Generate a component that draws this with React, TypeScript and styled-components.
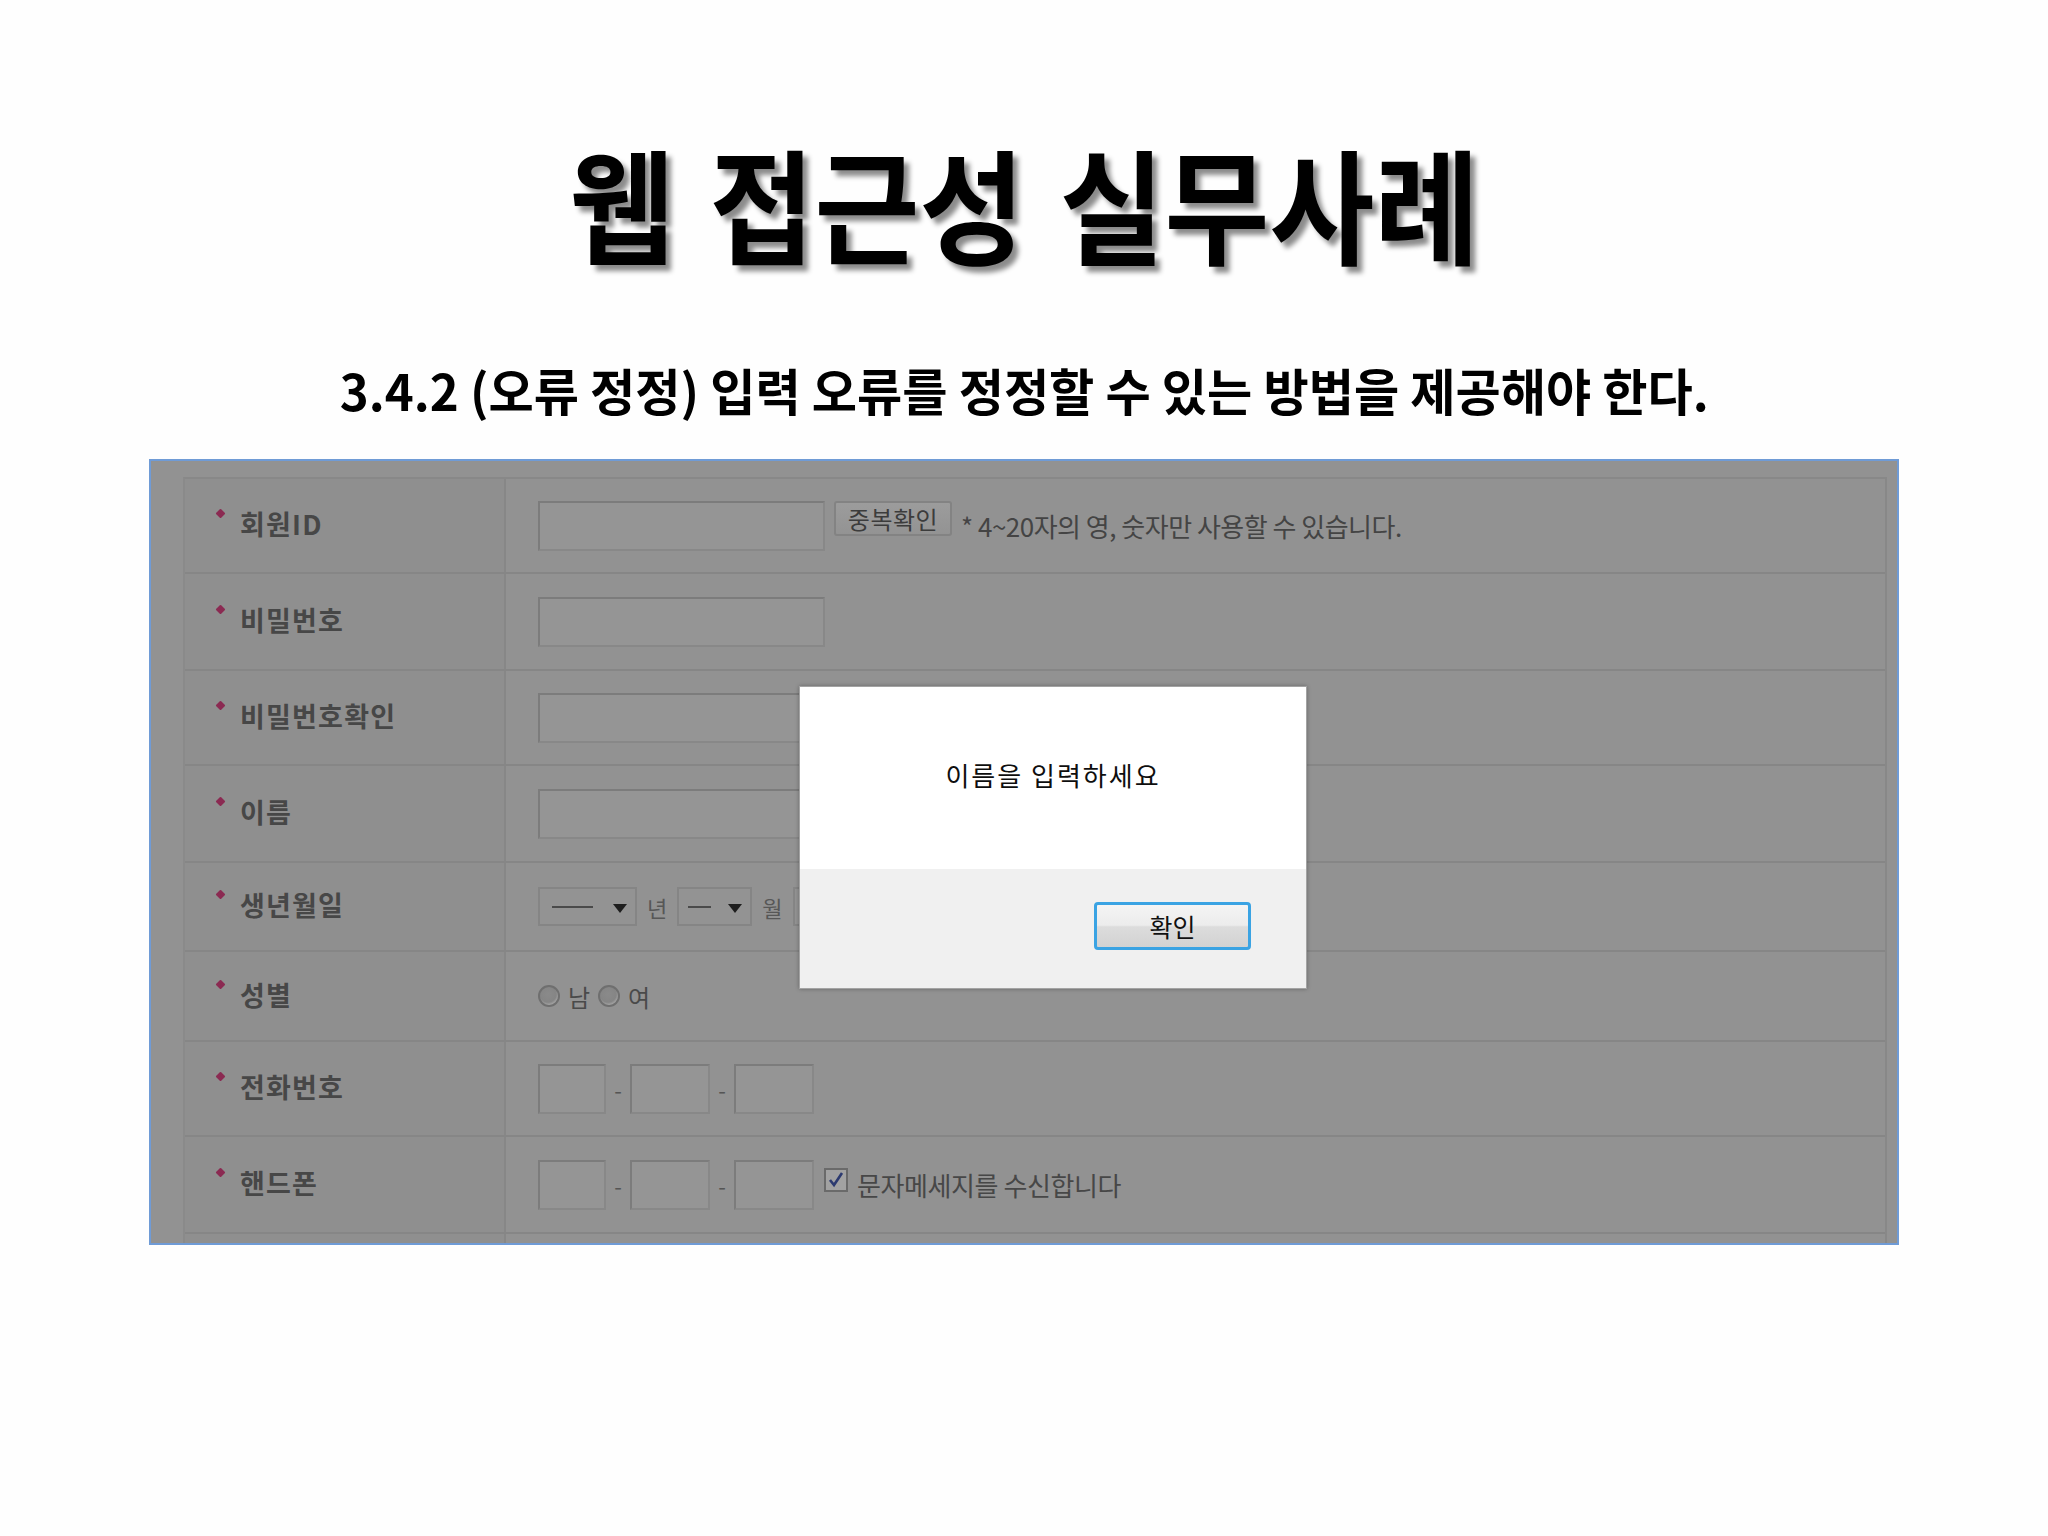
import React from "react";
import styled, { createGlobalStyle } from "styled-components";

const GlobalStyle = createGlobalStyle`
  html, body {
    margin: 0;
    padding: 0;
    background: #fefefe;
  }
  body {
    font-family: "Noto Sans CJK KR", "Noto Sans", sans-serif;
  }
`;

const Page = styled.div`
  width: 2048px;
  height: 1536px;
  box-sizing: border-box;
  padding-top: 139px;
  display: flex;
  flex-direction: column;
  align-items: center;
  background: #fefefe;
`;

const Title = styled.h1`
  margin: 0;
  font-size: 124px;
  line-height: 124px;
  font-weight: 700;
  color: #000;
  white-space: nowrap;
  word-spacing: 10px;
  transform: scaleX(0.92);
  text-shadow: 6px 6px 5px rgba(0, 0, 0, 0.45);
`;

const Subtitle = styled.h2`
  margin: 101px 0 0;
  font-size: 50px;
  line-height: 50px;
  font-weight: 700;
  color: #000;
  white-space: nowrap;
  transform: scaleX(0.983);
`;

const Frame = styled.div`
  position: relative;
  margin-top: 45px;
  width: 1750px;
  height: 786px;
  box-sizing: border-box;
  border: 2px solid #6f9bd6;
  background: #929292;
  padding: 16px 10px 0 32px;
  overflow: hidden;
`;

const Table = styled.div`
  border-top: 2px solid #888888;
  border-left: 2px solid #8a8a8a;
  border-right: 2px solid #888888;
`;

const Row = styled.div<{ $h: number }>`
  display: grid;
  grid-template-columns: 321px 1fr;
  height: ${(p) => p.$h}px;
  box-sizing: border-box;
  border-bottom: 2px solid #868686;
`;

const LabelCell = styled.div`
  display: flex;
  align-items: center;
  padding: 0 0 4px 28px;
  background: #8f8f8f;
  border-right: 2px solid #878787;
  font-size: 27px;
  font-weight: 700;
  color: #474747;
  letter-spacing: 1.2px;
`;

const Star = styled.span`
  width: 7px;
  height: 7px;
  margin: 0 16px 20px 4px;
  background: #8b2a52;
  transform: rotate(45deg);
  border-radius: 1px;
  flex-shrink: 0;
`;

const ValueCell = styled.div`
  display: flex;
  align-items: center;
  padding-left: 32px;
`;

const TopGroup = styled.div`
  display: flex;
  align-items: flex-start;
`;

const TextInput = styled.div<{ $w?: number }>`
  width: ${(p) => p.$w ?? 287}px;
  height: 50px;
  box-sizing: border-box;
  border: 2px solid #7c7c7c;
  border-right-color: #888888;
  border-bottom-color: #888888;
  background: #959595;
  flex-shrink: 0;
`;

const DupButton = styled.div`
  margin-left: 9px;
  width: 118px;
  height: 35px;
  box-sizing: border-box;
  border: 2px solid #838383;
  border-radius: 3px;
  background: linear-gradient(#9c9c9c, #939393);
  display: flex;
  align-items: center;
  justify-content: center;
  font-size: 24px;
  color: #3c3c3c;
  letter-spacing: 0.5px;
`;

const Hint = styled.span`
  margin-left: 9px;
  font-size: 26px;
  color: #444444;
  letter-spacing: -0.5px;
  white-space: nowrap;
`;

const SelectBox = styled.div<{ $w: number; $dash: number; $pad: number }>`
  width: ${(p) => p.$w}px;
  height: 39px;
  box-sizing: border-box;
  border: 2px solid #858585;
  background: #939393;
  display: flex;
  align-items: center;
  padding-left: ${(p) => p.$pad}px;
  padding-right: 8px;
  justify-content: space-between;
  flex-shrink: 0;

  &::before {
    content: "";
    width: ${(p) => p.$dash}px;
    height: 2px;
    background: #4a4a4a;
  }
`;

const Caret = styled.span`
  width: 0;
  height: 0;
  border-left: 7px solid transparent;
  border-right: 7px solid transparent;
  border-top: 9px solid #1e1e1e;
  margin-top: 3px;
`;

const Unit = styled.span`
  margin: 0 10px;
  font-size: 22px;
  color: #575757;
`;

const Radio = styled.span`
  width: 22px;
  height: 22px;
  box-sizing: border-box;
  border-radius: 50%;
  border: 2px solid #6f6f6f;
  background: radial-gradient(circle at 45% 40%, #8a8a8a 0%, #858585 55%, #a3a3a3 72%);
  flex-shrink: 0;
  margin-right: 8px;
`;

const RadioText = styled.span`
  font-size: 24px;
  color: #4a4a4a;
  margin-right: 8px;
`;

const Dash = styled.span`
  width: 24px;
  text-align: center;
  font-size: 22px;
  color: #555555;
`;

const CheckBox = styled.span`
  margin-left: 10px;
  width: 24px;
  height: 24px;
  box-sizing: border-box;
  border: 2px solid #6a6a6a;
  background: #a2a2a2;
  display: flex;
  align-items: center;
  justify-content: center;
  margin-top: -10px;
`;

const CheckText = styled.span`
  margin-left: 9px;
  font-size: 26px;
  color: #474747;
  letter-spacing: -0.4px;
  white-space: nowrap;
`;

const Dialog = styled.div`
  position: absolute;
  left: 648px;
  top: 225px;
  width: 508px;
  height: 303px;
  box-sizing: border-box;
  border: 1px solid #a3a3a3;
  box-shadow: 0 0 4px rgba(0, 0, 0, 0.3);
  display: flex;
  flex-direction: column;
  background: #ffffff;
`;

const DialogBody = styled.div`
  height: 182px;
  box-sizing: border-box;
  padding-bottom: 8px;
  display: flex;
  align-items: center;
  justify-content: center;
  font-size: 26px;
  letter-spacing: 2px;
  color: #0e0e0e;
  background: #ffffff;
`;

const DialogFooter = styled.div`
  flex: 1;
  background: #f0f0f0;
  display: flex;
  justify-content: flex-end;
  align-items: flex-start;
  padding: 33px 55px 0 0;
`;

const OkButton = styled.div`
  width: 157px;
  height: 48px;
  box-sizing: border-box;
  border: 3px solid #3aa3e3;
  border-radius: 4px;
  background: linear-gradient(#f4f4f4 0%, #ececec 48%, #dcdcdc 52%, #d2d2d2 100%);
  display: flex;
  align-items: center;
  justify-content: center;
  font-size: 25px;
  color: #111111;
`;

const Check = () => (
  <svg width="18" height="18" viewBox="0 0 18 18">
    <path d="M3 9 L7 14 L15 2" stroke="#2c3a70" strokeWidth="2.6" fill="none" />
  </svg>
);

const Label = ({ text }: { text: string }) => (
  <LabelCell>
    <Star />
    {text}
  </LabelCell>
);

const PhoneBoxes = () => (
  <>
    <TextInput $w={68} />
    <Dash>-</Dash>
    <TextInput $w={80} />
    <Dash>-</Dash>
    <TextInput $w={80} />
  </>
);

export default function App() {
  return (
    <>
      <GlobalStyle />
      <Page>
        <Title>웹 접근성 실무사례</Title>
        <Subtitle>3.4.2 (오류 정정) 입력 오류를 정정할 수 있는 방법을 제공해야 한다.</Subtitle>
        <Frame>
          <Table>
            <Row $h={95}>
              <Label text="회원ID" />
              <ValueCell>
                <TopGroup>
                  <TextInput />
                  <DupButton>중복확인</DupButton>
                </TopGroup>
                <Hint>* 4~20자의 영, 숫자만 사용할 수 있습니다.</Hint>
              </ValueCell>
            </Row>
            <Row $h={97}>
              <Label text="비밀번호" />
              <ValueCell>
                <TextInput />
              </ValueCell>
            </Row>
            <Row $h={95}>
              <Label text="비밀번호확인" />
              <ValueCell>
                <TextInput />
              </ValueCell>
            </Row>
            <Row $h={97}>
              <Label text="이름" />
              <ValueCell>
                <TextInput />
              </ValueCell>
            </Row>
            <Row $h={89}>
              <Label text="생년월일" />
              <ValueCell>
                <SelectBox $w={99} $dash={41} $pad={12}>
                  <Caret />
                </SelectBox>
                <Unit>년</Unit>
                <SelectBox $w={75} $dash={23} $pad={9}>
                  <Caret />
                </SelectBox>
                <Unit>월</Unit>
                <SelectBox $w={75} $dash={23} $pad={9}>
                  <Caret />
                </SelectBox>
              </ValueCell>
            </Row>
            <Row $h={90}>
              <Label text="성별" />
              <ValueCell>
                <Radio />
                <RadioText>남</RadioText>
                <Radio />
                <RadioText>여</RadioText>
              </ValueCell>
            </Row>
            <Row $h={95}>
              <Label text="전화번호" />
              <ValueCell>
                <PhoneBoxes />
              </ValueCell>
            </Row>
            <Row $h={97}>
              <Label text="핸드폰" />
              <ValueCell>
                <PhoneBoxes />
                <CheckBox>
                  <Check />
                </CheckBox>
                <CheckText>문자메세지를 수신합니다</CheckText>
              </ValueCell>
            </Row>
            <Row $h={60}>
              <LabelCell />
              <ValueCell />
            </Row>
          </Table>
          <Dialog>
            <DialogBody>이름을 입력하세요</DialogBody>
            <DialogFooter>
              <OkButton>확인</OkButton>
            </DialogFooter>
          </Dialog>
        </Frame>
      </Page>
    </>
  );
}
